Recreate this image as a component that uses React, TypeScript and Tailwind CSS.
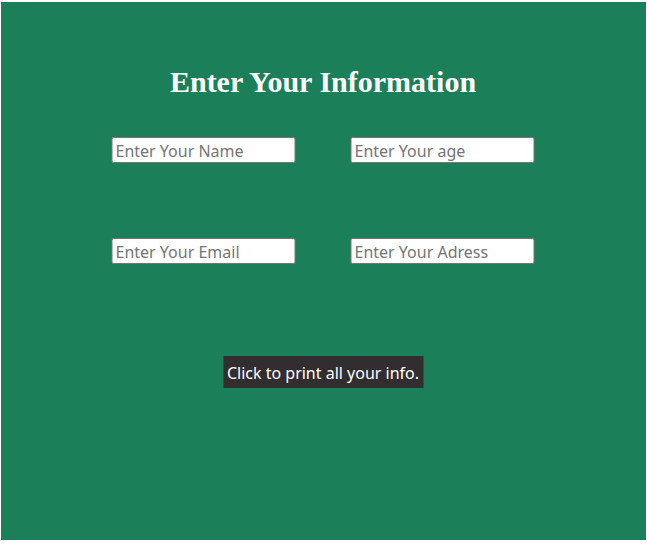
import React from "react";

export default function App() {
  const inputCls =
    "h-[26px] w-[184px] border border-[#767676] rounded-[2px] bg-white px-[3px] pt-[1px] text-[16px] text-black placeholder:text-[#757575] outline-none";
  return (
    <div className="w-[647px] h-[547px] bg-white">
      <div className="ml-px pt-[2px]">
        <div className="w-[645px] h-[538px] bg-[#1b7f5a] flex flex-col items-center" style={{ fontFamily: '"Noto Sans", "Open Sans", sans-serif' }}>
          <h1
            className="mt-[63px] text-[30px] leading-[34px] font-bold text-white translate-x-[-0.5px]"
            style={{ fontFamily: '"Liberation Serif", "Times New Roman", serif' }}
          >
            Enter Your Information
          </h1>
          <div className="mt-[38px] grid grid-cols-[184px_184px] gap-x-[55px] gap-y-[75px] -translate-x-[0.5px]">
            <input className={inputCls} placeholder="Enter Your Name" />
            <input className={inputCls} placeholder="Enter Your age" />
            <input className={inputCls} placeholder="Enter Your Email" />
            <input className={inputCls} placeholder="Enter Your Adress" />
          </div>
          <button className="mt-[92px] w-[200px] h-[32px] bg-[#322d2e] text-white text-[16px] leading-[30px] pt-[1px] -translate-x-[0.5px]">
            Click to print all your info.
          </button>
        </div>
      </div>
    </div>
  );
}
